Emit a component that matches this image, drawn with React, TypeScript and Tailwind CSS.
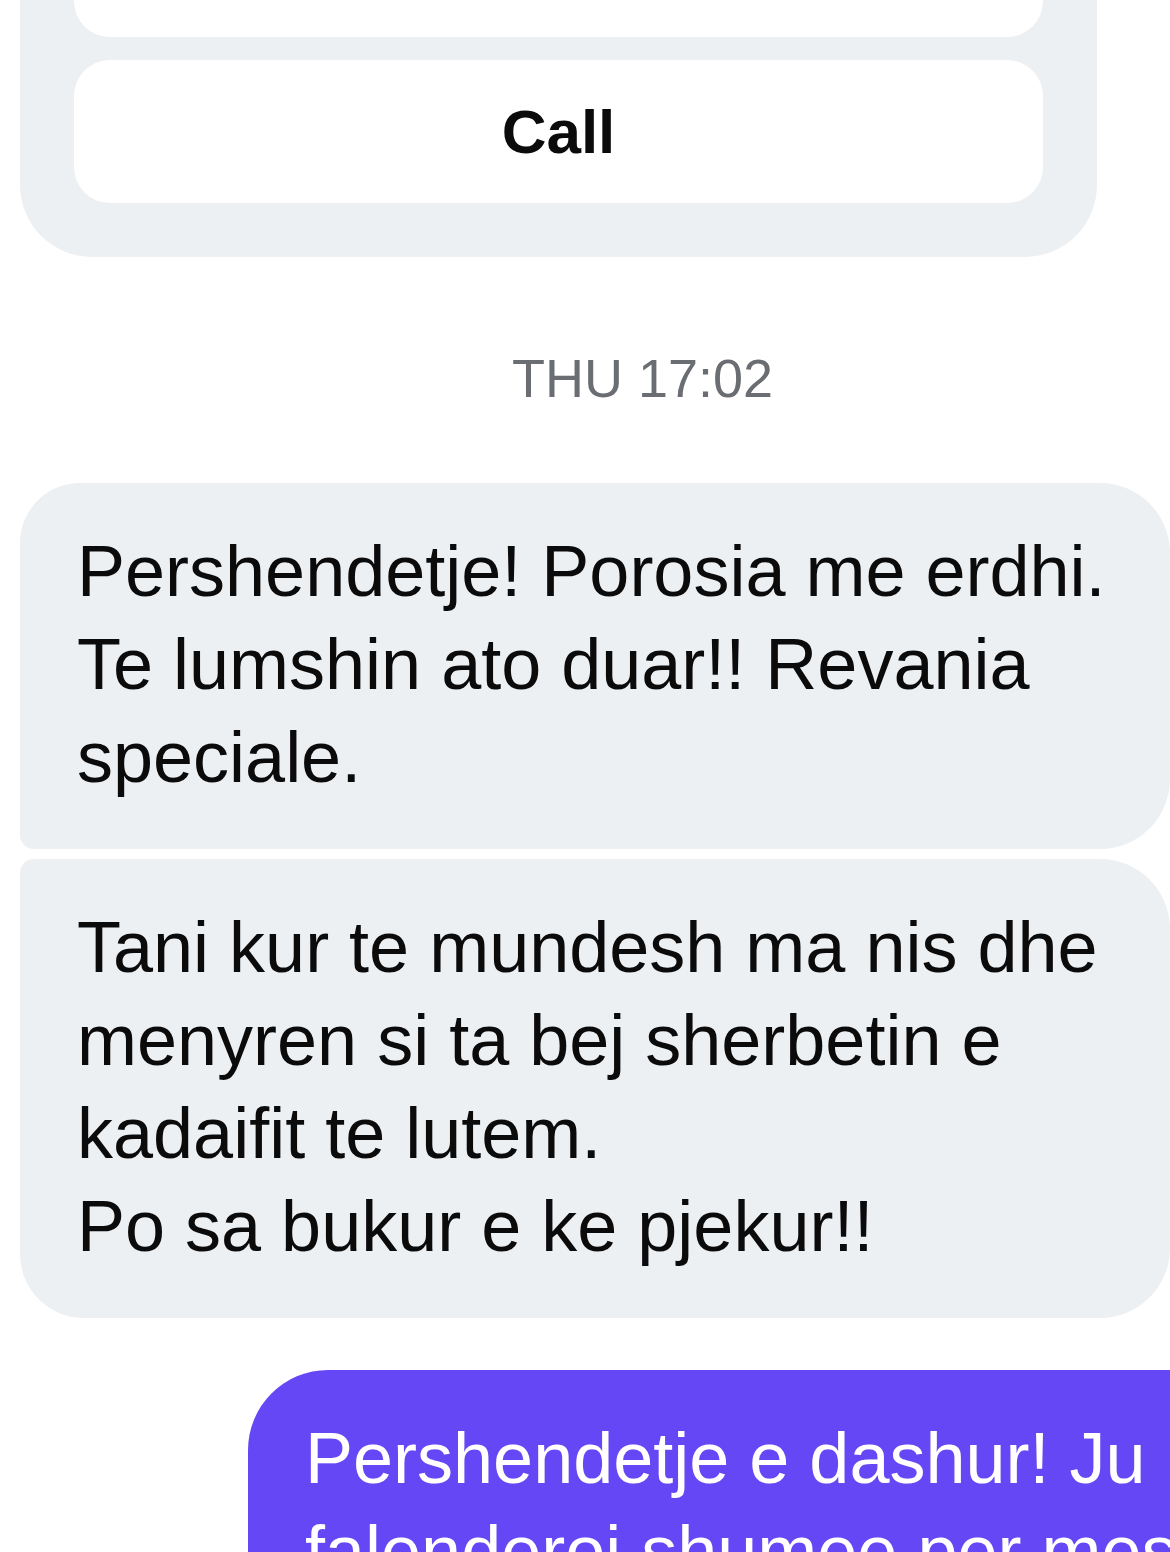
import React from 'react'

const firstMessage = ['Pershendetje! Porosia me erdhi.', 'Te lumshin ato duar!! Revania', 'speciale.']

const secondMessage = [
  'Tani kur te mundesh ma nis dhe',
  'menyren si ta bej sherbetin e',
  'kadaifit te lutem.',
  'Po sa bukur e ke pjekur!!',
]

const reply = ['Pershendetje e dashur! Ju', 'falenderoj shumee per mesazhin']

function Lines({ lines }: { lines: string[] }) {
  return (
    <>
      {lines.map((line) => (
        <div key={line} className="whitespace-nowrap">
          {line}
        </div>
      ))}
    </>
  )
}

export default function App() {
  return (
    <div className="h-[1552px] w-[1170px] overflow-hidden bg-white font-['Liberation_Sans',Arial,sans-serif] text-[#0b0b0c]">
      {/* action card, top cut off */}
      <div className="ml-[20px] w-[1077px] rounded-b-[72px] bg-[#edf0f3] px-[54px] pb-[54px]">
        <div className="h-[37px] rounded-b-[36px] bg-white" />
        <button className="mt-[23px] flex h-[143px] w-full items-center justify-center rounded-[36px] bg-white text-[62px] font-bold">
          Call
        </button>
      </div>

      {/* timestamp */}
      <div className="mt-[94px] flex justify-center pl-[115px] text-[54px] leading-[54px] text-[#6a6d71]">
        THU 17:02
      </div>

      {/* incoming */}
      <div className="mt-[78px] flex flex-col gap-[10px] pl-[20px]">
        <div className="w-[1150px] rounded-tl-[60px] rounded-bl-[14px] rounded-r-[70px] bg-[#edf0f3] pb-[45px] pl-[57px] pt-[42px] text-[72px] leading-[93px]">
          <Lines lines={firstMessage} />
        </div>
        <div className="w-[1150px] rounded-tl-[14px] rounded-bl-[64px] rounded-r-[70px] bg-[#edf0f3] pb-[45px] pl-[57px] pt-[42px] text-[72px] leading-[93px]">
          <Lines lines={secondMessage} />
        </div>
      </div>

      {/* outgoing */}
      <div className="ml-[248px] mt-[52px] w-[1000px] rounded-tl-[80px] bg-[#6647f6] pb-[40px] pl-[57px] pt-[42px] text-[72px] leading-[93px] text-white">
        <Lines lines={reply} />
      </div>
    </div>
  )
}
